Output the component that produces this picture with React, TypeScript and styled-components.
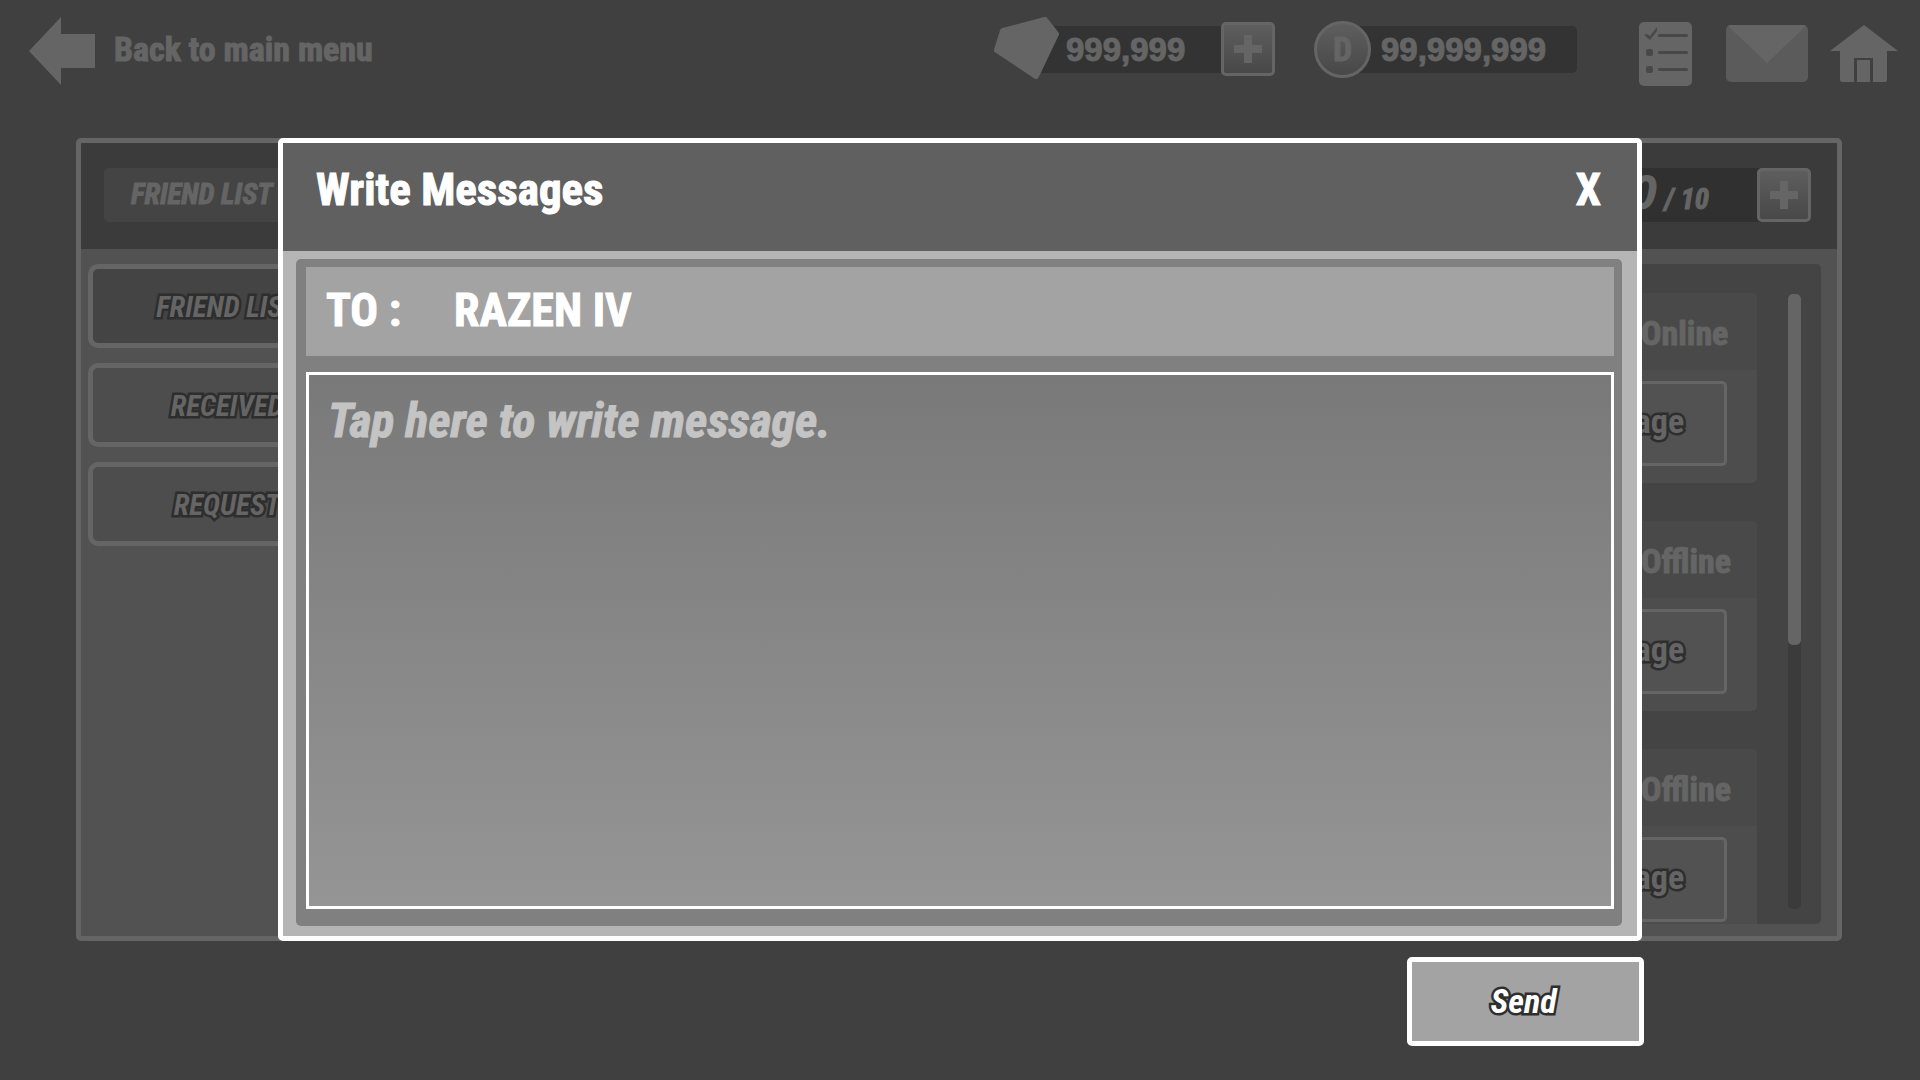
import React, { useState } from "react";
import styled, { createGlobalStyle, css } from "styled-components";

const ink = "#656565";
const display = `"Roboto Condensed", "Open Sans Condensed", "Lato", sans-serif`;
const numeric = `"Liberation Sans", Arial, sans-serif`;

const GlobalStyle = createGlobalStyle`
  *, *::before, *::after { box-sizing: border-box; }
  body { margin: 0; background: #404040; }
  button, input, textarea {
    font: inherit;
    color: inherit;
    margin: 0;
    padding: 0;
    border: 0;
    border-radius: 0;
    background: none;
    outline: none;
  }
  button { cursor: pointer; }
  svg { display: block; }
`;

const outlined = css`
  -webkit-text-stroke: 5px #2e2e2e;
  paint-order: stroke fill;
`;

const Page = styled.div`
  display: flex;
  flex-direction: column;
  height: 100vh;
  min-height: 640px;
  padding-bottom: 139px;
  background: #404040;
  color: ${ink};
  font-family: ${display};
  font-weight: 700;
  -webkit-text-stroke: 1px currentColor;
`;

const TopBar = styled.header`
  display: flex;
  align-items: flex-start;
  justify-content: space-between;
  flex: 0 0 138px;
  padding: 15px 22px 0 29px;
`;

const BackLink = styled.a`
  display: flex;
  align-items: center;
  gap: 18px;
  height: 72px;
  color: inherit;
  font-size: 34px;
  line-height: 40px;
  text-decoration: none;
  span { padding-bottom: 4px; }
`;

const Resources = styled.div`
  display: flex;
  align-items: center;
  height: 68px;
`;

const Resource = styled.div<{ $end?: boolean }>`
  display: flex;
  align-items: center;
  height: 68px;
  margin-right: ${(p) => (p.$end ? "62px" : "39px")};
`;

const Amount = styled.output<{ $end?: boolean }>`
  display: flex;
  align-items: center;
  width: ${(p) => (p.$end ? "224px" : "183px")};
  height: 47px;
  margin-left: ${(p) => (p.$end ? "-18px" : "-22px")};
  padding: 2px 0 0 28px;
  border-radius: ${(p) => (p.$end ? "0 5px 5px 0" : "0")};
  background: #333333;
  font-family: ${numeric};
  font-size: 33px;
  line-height: 40px;
`;

const Gem = styled.svg`
  position: relative;
  flex: none;
`;

const Coin = styled.span`
  position: relative;
  display: grid;
  place-items: center;
  flex: none;
  width: 57px;
  height: 57px;
  border: 3px solid ${ink};
  border-radius: 50%;
  background: linear-gradient(#5e5e5e, #484848);
  font-size: 34px;
  line-height: 40px;
`;

const PlusButton = styled.button`
  display: grid;
  place-items: center;
  flex: none;
  width: 54px;
  height: 54px;
  border: 3px solid ${ink};
  border-radius: 5px;
  background: linear-gradient(#5e5e5e, #484848);
`;

const Shortcuts = styled.nav`
  display: flex;
  align-items: center;
  padding-top: 10px;
`;

const Shortcut = styled.button<{ $gap?: number }>`
  margin-left: ${(p) => p.$gap ?? 0}px;
`;

const Panel = styled.main`
  display: flex;
  flex-direction: column;
  flex: 1;
  min-height: 0;
  margin: 0 78px 0 76px;
  border: 5px solid ${ink};
  border-radius: 5px;
  background: #525252;
`;

const PanelHeader = styled.div`
  display: flex;
  align-items: center;
  justify-content: space-between;
  flex: 0 0 106px;
  padding: 0 26px 2px 23px;
  background: #3b3b3b;
`;

const PanelTitle = styled.h1`
  width: 320px;
  height: 54px;
  margin: 0;
  padding: 6px 27px;
  border-radius: 5px;
  background: #444444;
  font-size: 29px;
  font-style: italic;
  line-height: 40px;
`;

const Counter = styled.div`
  display: flex;
  align-items: center;
  height: 54px;
  background: #303030;
  border-radius: 5px;
`;

const Count = styled.p`
  display: flex;
  align-items: baseline;
  gap: 8px;
  margin: 0;
  padding: 2px 48px 0 80px;
  font-size: 29px;
  font-style: italic;
  line-height: 54px;
  strong {
    font-family: ${numeric};
    font-size: 48px;
  }
`;

const PanelBody = styled.div`
  display: flex;
  flex: 1;
  min-height: 0;
  gap: 16px;
  padding: 15px 16px 12px 7px;
`;

const Tabs = styled.nav`
  display: flex;
  flex-direction: column;
  gap: 15px;
  flex: 0 0 278px;
`;

const Tab = styled.button<{ $active?: boolean }>`
  height: 84px;
  padding-top: 2px;
  border: 5px solid ${ink};
  border-radius: 10px;
  background: ${(p) => (p.$active ? "#444444" : "#4d4d4d")};
  font-size: 29px;
  font-style: italic;
  line-height: 40px;
  ${outlined}
`;

const Friends = styled.section`
  display: flex;
  justify-content: space-between;
  flex: 1;
  min-width: 0;
  border-radius: 5px;
  background: #444444;
  overflow: hidden;
`;

const FriendList = styled.ul`
  display: flex;
  flex-direction: column;
  flex: 1;
  gap: 38px;
  margin: 0;
  padding: 29px 31px 0 24px;
  list-style: none;
`;

const Card = styled.li`
  flex: none;
  border-radius: 5px;
  background: #4d4d4d;
  overflow: hidden;
`;

const Status = styled.div`
  display: flex;
  justify-content: flex-end;
  align-items: center;
  height: 77px;
  padding-top: 2px;
  background: #494949;
  font-size: 34px;
  line-height: 40px;
  span { width: 116px; }
`;

const CardActions = styled.div`
  display: flex;
  justify-content: flex-end;
  padding: 11px 30px 17px;
`;

const MessageButton = styled.button`
  width: 208px;
  height: 85px;
  padding-bottom: 6px;
  border: 3px solid ${ink};
  border-radius: 5px;
  background: #525252;
  font-size: 34px;
  line-height: 40px;
  ${outlined}
`;

const ScrollTrack = styled.div`
  width: 13px;
  margin: 30px 20px 15px 0;
  border-radius: 5px;
  background: #3b3b3b;
`;

const ScrollThumb = styled.div`
  height: 57%;
  border-radius: 5px;
  background: ${ink};
`;

const Overlay = styled.div`
  position: fixed;
  inset: 0;
  display: flex;
  flex-direction: column;
  gap: 16px;
  min-height: 640px;
  padding: 138px 276px 34px 278px;
  color: #ffffff;
`;

const Dialog = styled.section`
  display: flex;
  flex-direction: column;
  flex: 1;
  min-height: 0;
  margin-right: 2px;
  border: 5px solid #ffffff;
  border-radius: 5px;
  background: #b5b5b5;
`;

const DialogHeader = styled.div`
  display: flex;
  align-items: center;
  justify-content: space-between;
  flex: 0 0 108px;
  padding: 0 36px 14px 33px;
  background: #606060;
  font-size: 45px;
  line-height: 56px;
  -webkit-text-stroke-color: #ffffff;
`;

const DialogTitle = styled.h2`
  margin: 0;
  font-size: inherit;
`;

const Compose = styled.form`
  display: flex;
  flex-direction: column;
  gap: 16px;
  flex: 1;
  min-height: 0;
  margin: 8px 15px 10px 13px;
  padding: 8px 8px 17px 10px;
  border-radius: 5px;
  background: #808080;
  font-size: 46px;
  line-height: 56px;
`;

const Recipient = styled.div`
  display: flex;
  align-items: center;
  flex: 0 0 89px;
  padding: 0 20px 4px;
  background: #a3a3a3;
  label { flex: 0 0 128px; }
  input { flex: 1; min-width: 0; }
`;

const MessageBox = styled.textarea`
  flex: 1;
  min-height: 0;
  padding: 18px 19px;
  border: 3px solid #ffffff;
  background: linear-gradient(#797979, #959595);
  font-size: 48px;
  font-style: italic;
  resize: none;
  &::placeholder { color: #c4c4c4; opacity: 1; }
`;

const SendButton = styled.button`
  align-self: flex-end;
  flex: none;
  width: 237px;
  height: 89px;
  padding: 0 4px 2px 0;
  border: 5px solid #ffffff;
  border-radius: 5px;
  background: #a3a3a3;
  font-size: 34px;
  font-style: italic;
  line-height: 40px;
  ${outlined}
`;

const PlusIcon = () => (
  <svg width="28" height="28" viewBox="0 0 28 28" fill={ink} aria-hidden="true">
    <path d="M10 0h8v10h10v8H18v10h-8V18H0v-8h10z" />
  </svg>
);

const ArrowIcon = () => (
  <svg width="67" height="68" viewBox="0 0 67 68" fill={ink} aria-hidden="true">
    <path d="M0 34 32 0v17h34v34H32v17z" />
  </svg>
);

const GemIcon = () => (
  <Gem width="66" height="64" viewBox="0 0 66 64" fill={ink} stroke={ink} strokeWidth="6" strokeLinejoin="round" aria-hidden="true">
    <path d="M9 14 51 3 62 17 42 59 3 33z" />
  </Gem>
);

const ChecklistIcon = () => (
  <svg width="53" height="64" viewBox="0 0 53 64" aria-hidden="true">
    <rect width="53" height="64" rx="5" fill={ink} />
    <g fill="#484848">
      <path d="M5 13 8 12 11 14 18 5V9L11 18z" />
      <rect x="7" y="27" width="7" height="7" rx="2" />
      <rect x="7" y="44" width="7" height="7" rx="2" />
      <rect x="19" y="12" width="30" height="3" rx="1.5" />
      <rect x="19" y="29" width="30" height="3" rx="1.5" />
      <rect x="19" y="46" width="30" height="3" rx="1.5" />
    </g>
  </svg>
);

const MailIcon = () => (
  <svg width="82" height="58" viewBox="0 0 82 58" aria-hidden="true">
    <rect width="82" height="57" rx="5" fill="#5b5b5b" />
    <path d="M2 1Q3 0 5 0H77Q79 0 80 1L41 38z" fill={ink} />
  </svg>
);

const HomeIcon = () => (
  <svg width="68" height="58" viewBox="0 0 68 58" fill={ink} aria-hidden="true">
    <path d="M34 0 68 26H57V55Q57 57 55 57H43V33H24V57H12Q10 57 10 55V26H0z" />
    <path d="M27 35h13v22H27z" />
  </svg>
);

const tabs = ["FRIEND LIST", "RECEIVED", "REQUEST"];
const friends = ["Online", "Offline", "Offline"];

export default function App() {
  const [tab, setTab] = useState(0);
  const [message, setMessage] = useState("");

  return (
    <Page>
      <GlobalStyle />
      <TopBar>
        <BackLink href="#menu">
          <ArrowIcon />
          <span>Back to main menu</span>
        </BackLink>
        <Resources>
          <Resource>
            <GemIcon />
            <Amount>999,999</Amount>
            <PlusButton aria-label="Add gems"><PlusIcon /></PlusButton>
          </Resource>
          <Resource $end>
            <Coin>D</Coin>
            <Amount $end>99,999,999</Amount>
          </Resource>
          <Shortcuts>
            <Shortcut aria-label="Tasks"><ChecklistIcon /></Shortcut>
            <Shortcut aria-label="Mail" $gap={34}><MailIcon /></Shortcut>
            <Shortcut aria-label="Home" $gap={22}><HomeIcon /></Shortcut>
          </Shortcuts>
        </Resources>
      </TopBar>

      <Panel>
        <PanelHeader>
          <PanelTitle>FRIEND LIST</PanelTitle>
          <Counter>
            <Count><strong>0</strong><span>/ 10</span></Count>
            <PlusButton aria-label="Add slots"><PlusIcon /></PlusButton>
          </Counter>
        </PanelHeader>
        <PanelBody>
          <Tabs>
            {tabs.map((name, i) => (
              <Tab key={name} $active={i === tab} onClick={() => setTab(i)}>{name}</Tab>
            ))}
          </Tabs>
          <Friends>
            <FriendList>
              {friends.map((status, i) => (
                <Card key={i}>
                  <Status><span>{status}</span></Status>
                  <CardActions>
                    <MessageButton>Message</MessageButton>
                  </CardActions>
                </Card>
              ))}
            </FriendList>
            <ScrollTrack><ScrollThumb /></ScrollTrack>
          </Friends>
        </PanelBody>
      </Panel>

      <Overlay>
        <Dialog role="dialog" aria-labelledby="compose-title">
          <DialogHeader>
            <DialogTitle id="compose-title">Write Messages</DialogTitle>
            <button aria-label="Close">X</button>
          </DialogHeader>
          <Compose id="compose" onSubmit={(e) => e.preventDefault()}>
            <Recipient>
              <label htmlFor="recipient">TO :</label>
              <input id="recipient" defaultValue="RAZEN IV" />
            </Recipient>
            <MessageBox
              aria-label="Message"
              placeholder="Tap here to write message."
              value={message}
              onChange={(e) => setMessage(e.target.value)}
            />
          </Compose>
        </Dialog>
        <SendButton type="submit" form="compose">Send</SendButton>
      </Overlay>
    </Page>
  );
}
